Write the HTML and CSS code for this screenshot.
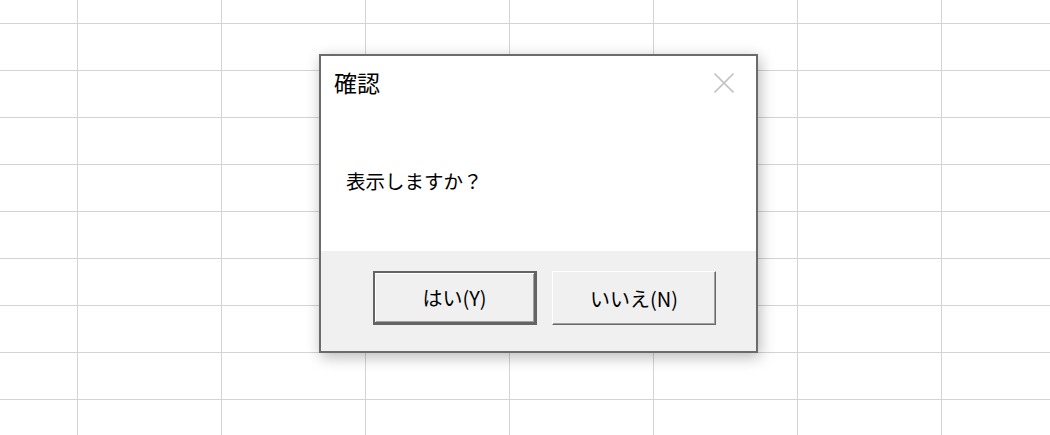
FILE: index.html
```html
<!DOCTYPE html>
<html lang="ja">
<head>
<meta charset="utf-8">
<title>確認</title>
<link rel="stylesheet" href="styles.css">
</head>
<body>
<div class="sheet">
  <div class="dialog">
    <div class="dialog-header">
      <span class="dialog-title">確認</span>
      <svg class="close-icon" width="20" height="20" viewBox="0 0 20 20" aria-hidden="true">
        <path d="M0.5 0.5 L19.5 19.5 M19.5 0.5 L0.5 19.5" stroke="#c4c4c4" stroke-width="1.6" fill="none"/>
      </svg>
    </div>
    <div class="dialog-body">
      <p class="dialog-message">表示しますか？</p>
    </div>
    <div class="dialog-footer">
      <button class="btn btn-default">はい(Y)</button>
      <button class="btn btn-normal">いいえ(N)</button>
    </div>
  </div>
</div>
</body>
</html>
```

FILE: styles.css
```css
html, body {
  margin: 0;
  padding: 0;
}

body {
  width: 1050px;
  height: 435px;
  overflow: hidden;
  font-family: "Noto Sans CJK JP", "Noto Sans", sans-serif;
  color: #000;
}

.sheet {
  width: 1050px;
  height: 435px;
  box-sizing: border-box;
  padding: 54px 0 0 319px;
  background-color: #fff;
  background-image:
    linear-gradient(to right, #d4d4d4 1px, transparent 1px),
    linear-gradient(to bottom, #d4d4d4 1px, transparent 1px);
  background-size: 144px 47px;
  background-position: 77px 23px;
}

.dialog {
  width: 439px;
  height: 299px;
  box-sizing: border-box;
  border: 2px solid #6b6b6b;
  background: #fff;
  box-shadow: 2px 4px 14px rgba(0, 0, 0, 0.28);
  display: flex;
  flex-direction: column;
}

.dialog-header {
  height: 54px;
  display: flex;
  align-items: center;
  justify-content: space-between;
  padding: 0 22px 3px 13px;
  box-sizing: border-box;
}

.dialog-title {
  font-size: 23px;
  line-height: 30px;
}

.close-icon {
  display: block;
  margin-top: 3px;
}

.dialog-body {
  flex: 1;
  display: flex;
  align-items: center;
  padding-left: 25px;
}

.dialog-message {
  margin: 0;
  font-size: 19.5px;
  line-height: 26px;
}

.dialog-footer {
  height: 100px;
  box-sizing: border-box;
  background: #f0f0f0;
  display: flex;
  align-items: flex-start;
  gap: 15px;
  padding: 20px 0 0 52px;
}

.btn {
  width: 164px;
  height: 54px;
  box-sizing: border-box;
  background: #f0f0f0;
  font-family: "Noto Sans CJK JP", "Noto Sans", sans-serif;
  font-size: 20px;
  color: #000;
  padding: 0;
  margin: 0;
}

.btn-default {
  border-style: solid;
  border-color: #646464;
  border-width: 2px 3px 3px 2px;
  box-shadow: inset 1px 1px 0 #fff, inset -1px -1px 0 #a0a0a0;
}

.btn-normal {
  border: 1px solid;
  border-color: #fff #696969 #696969 #fff;
  box-shadow: inset -1px -1px 0 #a0a0a0;
}
```
